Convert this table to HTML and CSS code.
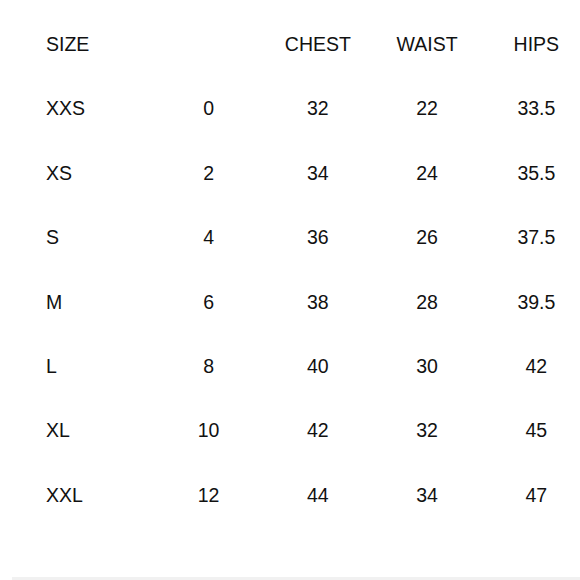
FILE: index.html
```html
<!DOCTYPE html>
<html>
<head>
<meta charset="utf-8">
<link rel="stylesheet" href="styles.css">
</head>
<body>
<div class="chart">
  <div class="row">
    <div class="cell first">SIZE</div><div class="cell"></div><div class="cell">CHEST</div><div class="cell">WAIST</div><div class="cell">HIPS</div>
  </div>
  <div class="row">
    <div class="cell first">XXS</div><div class="cell">0</div><div class="cell">32</div><div class="cell">22</div><div class="cell">33.5</div>
  </div>
  <div class="row">
    <div class="cell first">XS</div><div class="cell">2</div><div class="cell">34</div><div class="cell">24</div><div class="cell">35.5</div>
  </div>
  <div class="row">
    <div class="cell first">S</div><div class="cell">4</div><div class="cell">36</div><div class="cell">26</div><div class="cell">37.5</div>
  </div>
  <div class="row">
    <div class="cell first">M</div><div class="cell">6</div><div class="cell">38</div><div class="cell">28</div><div class="cell">39.5</div>
  </div>
  <div class="row">
    <div class="cell first">L</div><div class="cell">8</div><div class="cell">40</div><div class="cell">30</div><div class="cell">42</div>
  </div>
  <div class="row">
    <div class="cell first">XL</div><div class="cell">10</div><div class="cell">42</div><div class="cell">32</div><div class="cell">45</div>
  </div>
  <div class="row">
    <div class="cell first">XXL</div><div class="cell">12</div><div class="cell">44</div><div class="cell">34</div><div class="cell">47</div>
  </div>
</div>
<div class="divider"></div>
</body>
</html>
```
FILE: styles.css
```css
html, body {
  margin: 0;
  padding: 0;
  background: #fff;
  overflow: hidden;
}
body {
  width: 580px;
  height: 580px;
  font-family: "Liberation Sans", Arial, sans-serif;
  font-size: 19.5px;
  color: #111;
}
.chart {
  padding-top: 12px;
}
.row {
  display: grid;
  grid-template-columns: 154px repeat(4, 109.25px);
  height: 64.4px;
  line-height: 64.4px;
}
.cell {
  text-align: center;
  white-space: nowrap;
}
.cell.first {
  text-align: left;
  padding-left: 46px;
}
.divider {
  margin-top: 50px;
  margin-left: 12px;
  height: 3px;
  background: #f1f1f1;
}
```
